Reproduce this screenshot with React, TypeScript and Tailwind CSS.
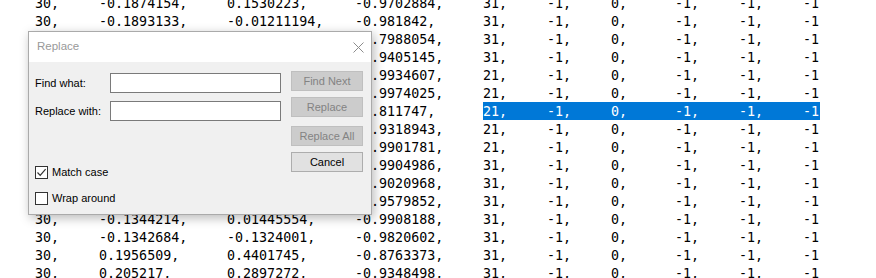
import React from "react";

type Row = string[];

const rows: Row[] = [
  ["30,", "-0.1874154,", "0.1530223,", "-0.9702884,", "31,", "-1,", "0,", "-1,", "-1,", "-1"],
  ["30,", "-0.1893133,", "-0.01211194,", "-0.981842,", "31,", "-1,", "0,", "-1,", "-1,", "-1"],
  ["30,", "-0.1721448,", "0.5762301,", "-0.7988054,", "31,", "-1,", "0,", "-1,", "-1,", "-1"],
  ["30,", "-0.1688732,", "0.2946115,", "-0.9405145,", "31,", "-1,", "0,", "-1,", "-1,", "-1"],
  ["30,", "-0.1523307,", "0.0472516,", "-0.9934607,", "21,", "-1,", "0,", "-1,", "-1,", "-1"],
  ["30,", "-0.1490266,", "-0.0140937,", "-0.9974025,", "21,", "-1,", "0,", "-1,", "-1,", "-1"],
  ["30,", "-0.1467718,", "-0.5649211,", "-0.811747,", "21,", "-1,", "0,", "-1,", "-1,", "-1"],
  ["30,", "-0.1452291,", "0.3328071,", "-0.9318943,", "21,", "-1,", "0,", "-1,", "-1,", "-1"],
  ["30,", "-0.1405376,", "0.0111853,", "-0.9901781,", "21,", "-1,", "0,", "-1,", "-1,", "-1"],
  ["30,", "-0.1389924,", "-0.0072418,", "-0.9904986,", "31,", "-1,", "0,", "-1,", "-1,", "-1"],
  ["30,", "-0.1373120,", "0.4277394,", "-0.9020968,", "31,", "-1,", "0,", "-1,", "-1,", "-1"],
  ["30,", "-0.1358802,", "0.2497116,", "-0.9579852,", "31,", "-1,", "0,", "-1,", "-1,", "-1"],
  ["30,", "-0.1344214,", "0.01445554,", "-0.9908188,", "31,", "-1,", "0,", "-1,", "-1,", "-1"],
  ["30,", "-0.1342684,", "-0.1324001,", "-0.9820602,", "31,", "-1,", "0,", "-1,", "-1,", "-1"],
  ["30,", "0.1956509,", "0.4401745,", "-0.8763373,", "31,", "-1,", "0,", "-1,", "-1,", "-1"],
  ["30,", "0.205217,", "0.2897272,", "-0.9348498,", "31,", "-1,", "0,", "-1,", "-1,", "-1"],
];

const widths = [
  "w-[64px]",
  "w-[128px]",
  "w-[128px]",
  "w-[128px]",
  "w-[64px]",
  "w-[64px]",
  "w-[64px]",
  "w-[64px]",
  "w-[64px]",
  "w-[17px]",
];

function DataRow({ row, selected }: { row: Row; selected: boolean }) {
  return (
    <div className="flex h-[18px] pl-[35px]">
      {row.map((cell, i) => {
        const sel = selected && i >= 4;
        return (
          <span
            key={i}
            className={
              "shrink-0 h-[18px] pt-px leading-[18px] whitespace-pre " +
              widths[i] +
              (sel ? " bg-[#0078d7] text-white" : " text-black")
            }
          >
            {cell}
          </span>
        );
      })}
    </div>
  );
}

function DisabledButton({ label }: { label: string }) {
  return (
    <div className="h-[20px] w-[72px] border border-[#bfbfbf] bg-[#cccccc] flex items-center justify-center text-[#838383]">
      {label}
    </div>
  );
}

export default function App() {
  return (
    <div className="relative w-[876px] h-[278px] overflow-hidden bg-white">
      <div
        className="mt-[-6px] text-[13.33px]"
        style={{ fontFamily: '"DejaVu Sans Mono", monospace' }}
      >
        {rows.map((r, i) => (
          <DataRow key={i} row={r} selected={i === 6} />
        ))}
      </div>

      {/* Replace dialog */}
      <div
        className="absolute left-[28px] top-[31px] w-[344px] h-[184px] border border-[#aaaaaa] bg-[#f0f0f0] shadow-[2px_3px_10px_rgba(0,0,0,0.28)] flex flex-col text-[11px] text-black"
        style={{ fontFamily: '"Liberation Sans", Arial, sans-serif' }}
      >
        <div className="h-[30px] bg-white flex items-center justify-between pl-[8px] pr-[7px]">
          <span className="text-[11.5px] text-[#999999]">Replace</span>
          <svg width="11" height="11" viewBox="0 0 11 11">
            <path d="M0.5 0.5 L10.5 10.5 M10.5 0.5 L0.5 10.5" stroke="#8c8c8c" strokeWidth="1" fill="none" />
          </svg>
        </div>
        <div className="flex flex-1 pl-[6px] pr-[8px]">
          <div className="w-[246px] flex flex-col pt-[11px]">
            <div className="flex items-center h-[20px]">
              <span className="w-[75px]">Find what:</span>
              <div className="w-[171px] h-[20px] border border-[#7a7a7a] bg-white" />
            </div>
            <div className="flex items-center h-[20px] mt-[8px]">
              <span className="w-[75px]">Replace with:</span>
              <div className="w-[171px] h-[20px] border border-[#7a7a7a] bg-white" />
            </div>
            <div className="flex items-center h-[13px] mt-[45px]">
              <div className="w-[13px] h-[13px] border border-[#333333] bg-white flex items-center justify-center">
                <svg width="11" height="11" viewBox="0 0 11 11">
                  <path d="M1.5 5.5 L4.2 8.3 L9.6 2.2" stroke="#333333" strokeWidth="1.2" fill="none" />
                </svg>
              </div>
              <span className="ml-[4px]">Match case</span>
            </div>
            <div className="flex items-center h-[13px] mt-[13px]">
              <div className="w-[13px] h-[13px] border border-[#333333] bg-white" />
              <span className="ml-[4px]">Wrap around</span>
            </div>
          </div>
          <div className="ml-[10px] flex flex-col pt-[9px]">
            <DisabledButton label="Find Next" />
            <div className="mt-[6px]">
              <DisabledButton label="Replace" />
            </div>
            <div className="mt-[9px]">
              <DisabledButton label="Replace All" />
            </div>
            <div className="mt-[6px] h-[20px] w-[72px] border border-[#adadad] bg-[#e1e1e1] flex items-center justify-center">
              Cancel
            </div>
          </div>
        </div>
      </div>
    </div>
  );
}
